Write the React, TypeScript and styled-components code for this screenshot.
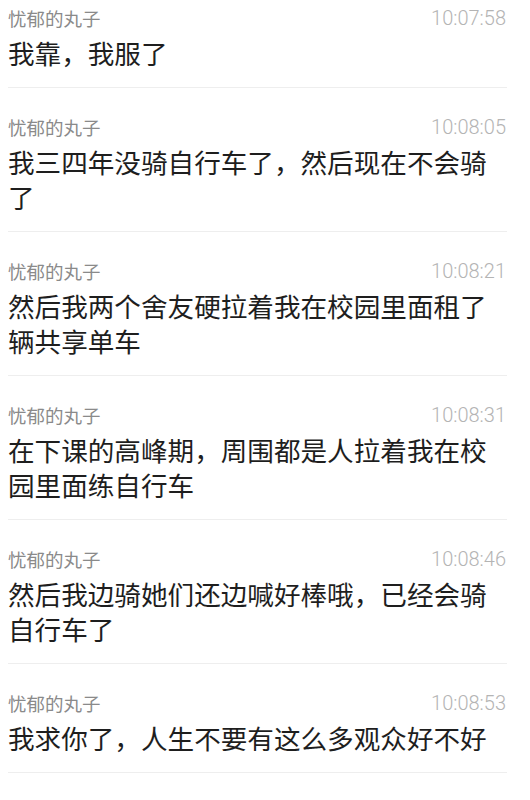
import React from 'react';
import styled, { createGlobalStyle } from 'styled-components';

const GlobalStyle = createGlobalStyle`
  html, body {
    margin: 0;
    padding: 0;
    background: #ffffff;
    overflow: hidden;
  }
  body {
    font-family: 'Noto Sans CJK SC', 'Noto Sans', sans-serif;
  }
`;

const Page = styled.div`
  width: 530px;
  height: 800px;
  overflow: hidden;
  background: #ffffff;
`;

// the capture is scrolled a little, the first row is cut at the top
const List = styled.div`
  margin-top: -21px;
  padding: 0 23px 0 8px;
`;

const Item = styled.div`
  padding: 23px 0 17px;
  border-bottom: 1px solid #eeeeee;
`;

const Header = styled.div`
  display: flex;
  justify-content: space-between;
  align-items: center;
  height: 33px;
`;

const Name = styled.span`
  font-family: 'Noto Sans CJK SC', sans-serif;
  font-size: 18.5px;
  color: #8a8a8a;
  line-height: 33px;
`;

const Time = styled.span`
  font-family: Roboto, 'Noto Sans', sans-serif;
  font-weight: 300;
  font-size: 20px;
  color: #b4b4b4;
  line-height: 33px;
  margin-right: 1px;
`;

const Message = styled.div`
  font-family: 'Noto Sans CJK SC', sans-serif;
  font-size: 26.6px;
  line-height: 35px;
  color: #1e1e1e;
`;

interface Msg {
  name: string;
  time: string;
  text: string;
}

const messages: Msg[] = [
  { name: '忧郁的丸子', time: '10:07:58', text: '我靠，我服了' },
  { name: '忧郁的丸子', time: '10:08:05', text: '我三四年没骑自行车了，然后现在不会骑了' },
  { name: '忧郁的丸子', time: '10:08:21', text: '然后我两个舍友硬拉着我在校园里面租了辆共享单车' },
  { name: '忧郁的丸子', time: '10:08:31', text: '在下课的高峰期，周围都是人拉着我在校园里面练自行车' },
  { name: '忧郁的丸子', time: '10:08:46', text: '然后我边骑她们还边喊好棒哦，已经会骑自行车了' },
  { name: '忧郁的丸子', time: '10:08:53', text: '我求你了，人生不要有这么多观众好不好' },
];

const App: React.FC = () => {
  return (
    <Page>
      <GlobalStyle />
      <List>
        {messages.map((m, i) => (
          <Item key={i}>
            <Header>
              <Name>{m.name}</Name>
              <Time>{m.time}</Time>
            </Header>
            <Message>{m.text}</Message>
          </Item>
        ))}
      </List>
    </Page>
  );
};

export default App;
